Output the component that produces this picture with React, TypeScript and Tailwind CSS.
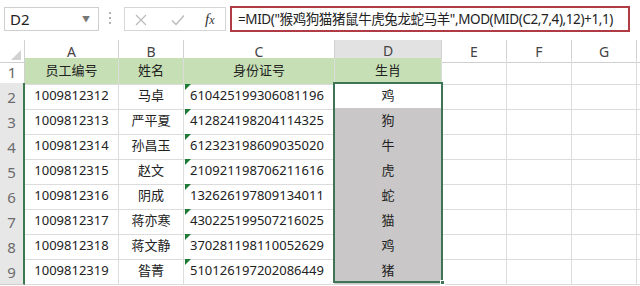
import React from 'react';

const rows = [
  { id: '1009812312', name: '马卓', card: '610425199306081196', zodiac: '鸡' },
  { id: '1009812313', name: '严平夏', card: '412824198204114325', zodiac: '狗' },
  { id: '1009812314', name: '孙昌玉', card: '612323198609035020', zodiac: '牛' },
  { id: '1009812315', name: '赵文', card: '210921198706211616', zodiac: '虎' },
  { id: '1009812316', name: '阴成', card: '132626197809134011', zodiac: '蛇' },
  { id: '1009812317', name: '蒋亦寒', card: '430225199507216025', zodiac: '猫' },
  { id: '1009812318', name: '蒋文静', card: '370281198110052629', zodiac: '鸡' },
  { id: '1009812319', name: '昝菁', card: '510126197202086449', zodiac: '猪' },
];

const font = { fontFamily: '"Noto Sans", "Noto Sans CJK SC", sans-serif' };
const cols = 'grid grid-cols-[25px_94px_65px_151px_107px_65px_65px_65px_3px]';
const cell = 'border-r border-b border-[#dcdcdc] flex items-center justify-center';

const FormulaBar: React.FC = () => (
  <div className="h-10 flex items-start pt-[7px] bg-white">
    <div className="ml-1 w-[95px] h-[24px] border border-[#cfcfcf] flex items-center justify-between pl-[5px] pr-[8px]">
      <span className="text-[15px] text-[#222]">D2</span>
      <span className="text-[8px] text-[#777]">▼</span>
    </div>
    <div className="ml-[10px] mt-[5px] flex flex-col gap-[3px]">
      <span className="w-[2px] h-[2px] bg-[#b0b0b0]" />
      <span className="w-[2px] h-[2px] bg-[#b0b0b0]" />
      <span className="w-[2px] h-[2px] bg-[#b0b0b0]" />
    </div>
    <div className="ml-[13px] w-[102px] h-[24px] border border-[#d6d6d6] flex items-center pl-[10px]">
      <svg width="12" height="12" viewBox="0 0 12 12" className="mt-[1px]">
        <path d="M1 1L11 11M11 1L1 11" stroke="#bcbcbc" strokeWidth="1.2" />
      </svg>
      <svg width="14" height="12" viewBox="0 0 14 12" className="ml-[24px] mt-[1px]">
        <path d="M1 6.5L5 10.5L13 1.5" stroke="#bcbcbc" strokeWidth="1.5" fill="none" />
      </svg>
      <span className="ml-[20px] text-[15px] italic text-[#333]" style={{ fontFamily: '"Liberation Serif", serif' }}>
        f<span className="text-[12px]">x</span>
      </span>
    </div>
    <div className="ml-[4px] w-[400px] h-[26px] -mt-[1px] border-2 border-[#b13b45] flex items-center pl-[6px] text-[13.5px] tracking-[-0.4px] text-[#222] whitespace-nowrap overflow-hidden">
      =MID("猴鸡狗猫猪鼠牛虎兔龙蛇马羊",MOD(MID(C2,7,4),12)+1,1)
    </div>
  </div>
);

const App: React.FC = () => {
  return (
    <div className="w-[640px] h-[286px] bg-white overflow-hidden" style={font}>
      <FormulaBar />
      <div className="relative">
        <div className={`${cols} h-[18px] text-[14px] text-[#444]`}>
          <div className="border-r border-b border-[#d0d0d0] relative">
            <svg width="10" height="10" viewBox="0 0 10 10" className="absolute right-[3px] bottom-[2px]">
              <path d="M10 0L10 10L0 10Z" fill="#d2d2d2" />
            </svg>
          </div>
          {['A', 'B', 'C'].map((c) => (
            <div key={c} className="border-r border-b border-[#d0d0d0] flex items-center justify-center">
              {c}
            </div>
          ))}
          <div className="border-r border-[#d0d0d0] border-b-2 border-b-[#2f6f48] bg-[#e2e2e2] flex items-center justify-center">
            D
          </div>
          {['E', 'F', 'G'].map((c) => (
            <div key={c} className="border-r border-b border-[#d0d0d0] flex items-center justify-center">
              {c}
            </div>
          ))}
          <div className="border-b border-[#d0d0d0]" />
        </div>

        <div className={`${cols} h-[25px] text-[13px] text-[#222]`}>
          <div className="border-r border-b border-[#d0d0d0] flex items-center justify-center text-[15px] text-[#666] pt-[3px]">1</div>
          {['员工编号', '姓名', '身份证号', '生肖'].map((h) => (
            <div key={h} className={`${cell} bg-[#c6dfb4]`}>
              {h}
            </div>
          ))}
          <div className={cell} />
          <div className={cell} />
          <div className={cell} />
          <div className="border-b border-[#dcdcdc]" />
        </div>

        {rows.map((r, i) => (
          <div key={r.id} className={`${cols} h-[25px] text-[#222]`}>
            <div className="bg-[#e7e7e7] border-r-2 border-r-[#3d7a52] border-b border-b-[#cfcfcf] flex items-center justify-center text-[15px] text-[#6b6b6b] pt-[3px]">
              {i + 2}
            </div>
            <div className={`${cell} text-[13px]`}>{r.id}</div>
            <div className={`${cell} text-[13px]`}>{r.name}</div>
            <div className={`${cell} text-[13px] relative pl-[6px] justify-start`}>
              <svg width="6" height="6" viewBox="0 0 6 6" className="absolute left-[1px] top-[1px]">
                <path d="M0 0L6 0L0 6Z" fill="#1d7a34" />
              </svg>
              {r.card}
            </div>
            <div className={`${cell} text-[13px] ${i === 0 ? 'bg-white' : 'bg-[#c9c7c7]'}`}>{r.zodiac}</div>
            <div className={cell} />
            <div className={cell} />
            <div className={cell} />
            <div className="border-b border-[#dcdcdc]" />
          </div>
        ))}

        <div className="absolute left-[333px] top-[42px] w-[110px] h-[201px] border-2 border-[#3d7556] pointer-events-none">
          <div className="absolute -right-[4px] -bottom-[4px] w-[5px] h-[5px] bg-[#3d7556] border border-white" />
        </div>
      </div>
    </div>
  );
};

export default App;
